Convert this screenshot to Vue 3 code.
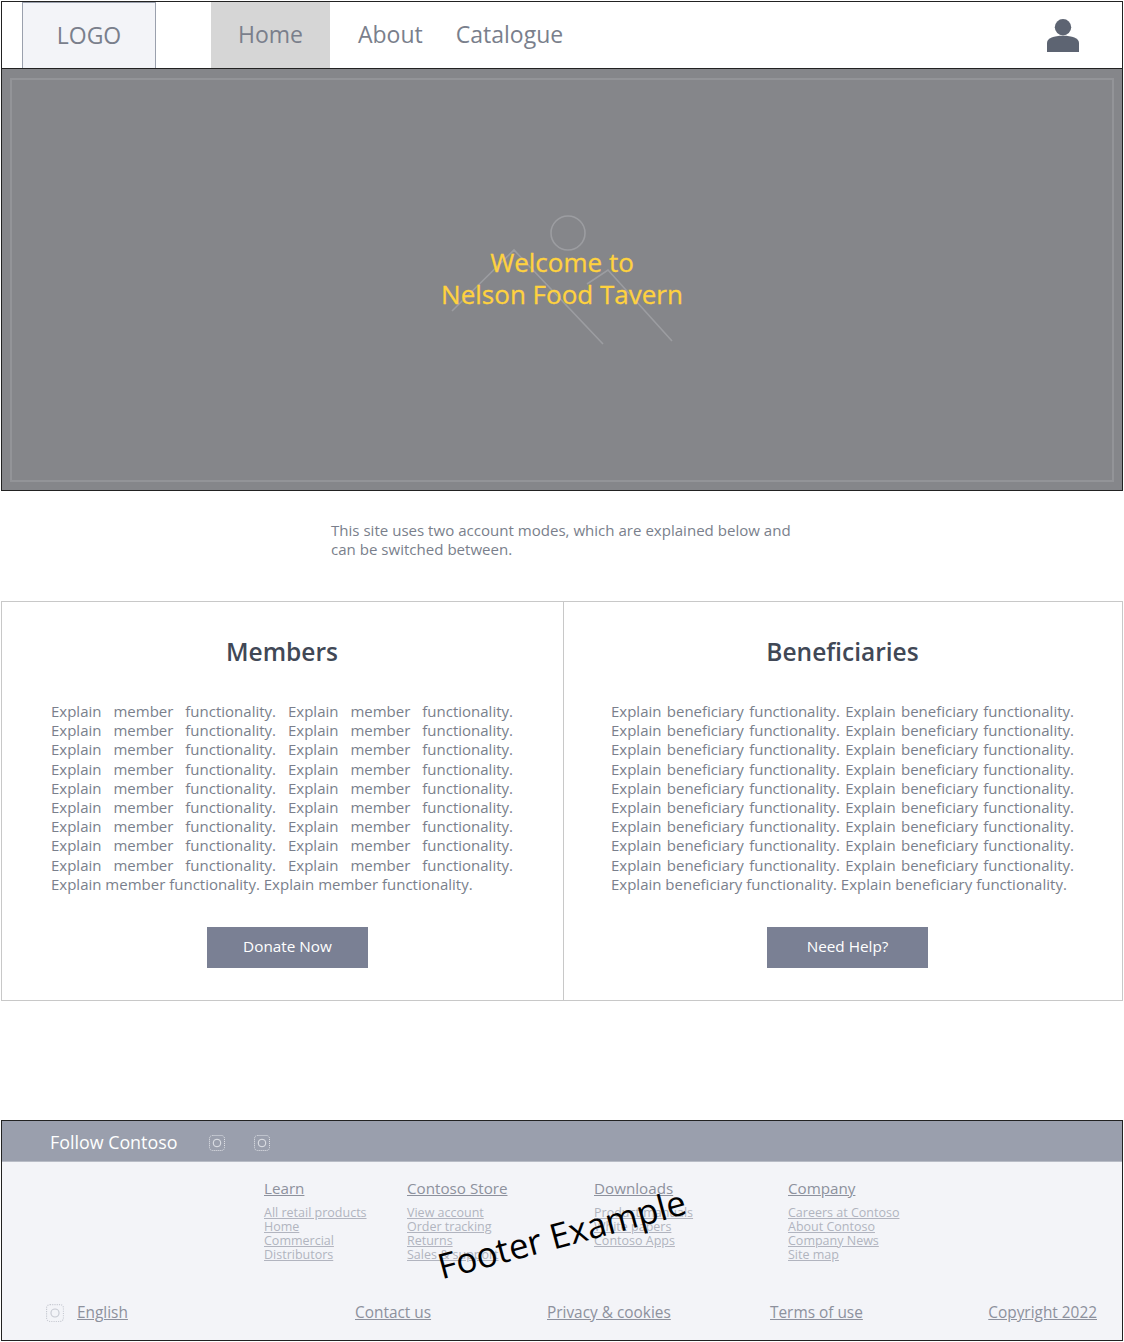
<template>
  <div class="page">
    <header class="top-nav">
      <div class="logo">LOGO</div>
      <nav class="nav-links">
        <a class="nav-link active">Home</a>
        <a class="nav-link">About</a>
        <a class="nav-link">Catalogue</a>
      </nav>
      <svg class="user-icon" viewBox="0 0 32 33">
        <circle cx="16" cy="8.2" r="8.2" />
        <path d="M0 33V24C0 19 7 16.7 16 16.7S32 19 32 24V33Z" />
      </svg>
    </header>

    <section class="hero">
      <div class="hero-frame">
        <svg class="hero-art" viewBox="0 0 240 150">
          <circle cx="128" cy="23" r="17" />
          <path d="M12 101L74 40L163 134M147 74L168 60L232 131" />
        </svg>
        <h1>Welcome to<br />Nelson Food Tavern</h1>
      </div>
    </section>

    <p class="intro">This site uses two account modes, which are explained below and can be switched between.</p>

    <section class="modes">
      <article v-for="mode in modes" :key="mode.title" class="mode">
        <h2>{{ mode.title }}</h2>
        <p>{{ mode.text }}</p>
        <button class="cta">{{ mode.action }}</button>
      </article>
    </section>

    <footer class="footer">
      <div class="follow">
        <span class="follow-label">Follow Contoso</span>
        <svg v-for="n in 2" :key="n" class="dot-icon" viewBox="0 0 16 16">
          <rect x="0.5" y="0.5" width="15" height="15" rx="3" />
          <circle cx="8" cy="8" r="3.8" />
        </svg>
      </div>
      <div class="columns">
        <div v-for="col in columns" :key="col.title" class="column" :style="{ width: col.width + 'px' }">
          <a class="col-title">{{ col.title }}</a>
          <a v-for="link in col.links" :key="link" class="col-link">{{ link }}</a>
        </div>
      </div>
      <div class="legal">
        <span class="lang">
          <svg class="dot-icon faint" viewBox="0 0 16 16">
            <rect x="0.5" y="0.5" width="15" height="15" rx="3" />
            <circle cx="8" cy="8" r="3.6" />
          </svg>
          <a>English</a>
        </span>
        <a>Contact us</a>
        <a>Privacy &amp; cookies</a>
        <a>Terms of use</a>
        <a class="copyright">Copyright 2022</a>
      </div>
      <div class="stamp">Footer Example</div>
    </footer>
  </div>
</template>

<script setup>
const modes = [
  {
    title: 'Members',
    text: 'Explain member functionality. '.repeat(20).trim(),
    action: 'Donate Now'
  },
  {
    title: 'Beneficiaries',
    text: 'Explain beneficiary functionality. '.repeat(20).trim(),
    action: 'Need Help?'
  }
]

const columns = [
  { title: 'Learn', width: 143, links: ['All retail products', 'Home', 'Commercial', 'Distributors'] },
  { title: 'Contoso Store', width: 187, links: ['View account', 'Order tracking', 'Returns', 'Sales & support'] },
  { title: 'Downloads', width: 194, links: ['Product manuals', 'White papers', 'Contoso Apps'] },
  { title: 'Company', width: 150, links: ['Careers at Contoso', 'About Contoso', 'Company News', 'Site map'] }
]
</script>

<style>
html,
body {
  margin: 0;
  background: #fff;
}
</style>

<style scoped>
.page {
  width: 1122px;
  padding: 1px 0 0 1px;
  font-family: 'Open Sans', 'Noto Sans', sans-serif;
  color: #7a7f8c;
}

.top-nav {
  height: 68px;
  box-sizing: border-box;
  display: flex;
  align-items: stretch;
  background: #fff;
  border: 1px solid #222;
}

.logo {
  width: 134px;
  box-sizing: border-box;
  margin-left: 20px;
  padding-bottom: 2px;
  background: #f3f4f8;
  border: 1px solid #9aa0ad;
  border-bottom: 0;
  display: flex;
  align-items: center;
  justify-content: center;
  font-size: 23px;
}

.nav-links {
  display: flex;
  margin-left: 55px;
  font-size: 23px;
}

.nav-link {
  display: flex;
  align-items: center;
  padding: 0 33px 2px 0;
}

.nav-link.active {
  width: 119px;
  padding: 0 0 2px;
  justify-content: center;
  background: #d6d6d6;
  margin-right: 28px;
}

.user-icon {
  width: 32px;
  height: 33px;
  margin: 17px 43px 0 auto;
  fill: #5d6472;
}

.hero {
  height: 422px;
  box-sizing: border-box;
  padding: 9px 8px 8px;
  background: #85868a;
  border: 1px solid #222;
  border-top: 0;
}

.hero-frame {
  position: relative;
  height: 100%;
  box-sizing: border-box;
  border: 2px solid #939498;
  display: flex;
  align-items: center;
  justify-content: center;
}

.hero-art {
  position: absolute;
  left: 428px;
  top: 130px;
  width: 240px;
  height: 150px;
  fill: none;
  stroke: #9c9da1;
  stroke-width: 1.6;
}

.hero-frame h1 {
  position: relative;
  margin: 0 0 4px;
  color: #ffd23f;
  font-size: 26px;
  line-height: 32px;
  font-weight: 400;
  -webkit-text-stroke: 0.3px #ffd23f;
  text-align: center;
}

.intro {
  width: 470px;
  margin: 30px 0 42px 330px;
  font-size: 15.07px;
  line-height: 19px;
}

.modes {
  display: grid;
  grid-template-columns: 561px 1fr;
  height: 400px;
  box-sizing: border-box;
  border: 1px solid #c8c8c8;
}

.mode {
  display: flex;
  flex-direction: column;
  padding: 0 50px 0 49px;
}

.mode + .mode {
  border-left: 1px solid #c8c8c8;
  padding: 0 48px 0 47px;
}

.mode h2 {
  margin: 32px 0 0;
  color: #414856;
  font-size: 24.5px;
  line-height: 36px;
  font-weight: 600;
  text-align: center;
}

.mode p {
  margin: 32px 0 0;
  font-size: 15px;
  line-height: 19.2px;
  text-align: justify;
}

.cta {
  width: 161px;
  height: 41px;
  margin: 33px 0 0 156px;
  padding: 0 0 3px;
  border: 0;
  background: #7a8094;
  color: #fff;
  font-family: inherit;
  font-size: 15.3px;
}

.footer {
  position: relative;
  margin-top: 119px;
  height: 221px;
  box-sizing: border-box;
  background: #f3f4f8;
  border: 1px solid #222;
}

.follow {
  height: 41px;
  box-sizing: border-box;
  display: flex;
  align-items: center;
  padding: 3px 0 0 48px;
  background: #9a9fad;
  border-bottom: 1px solid #b8bcc6;
  color: #fff;
  font-size: 17.85px;
}

.follow-label {
  width: 159px;
  margin-top: -2px;
}

.dot-icon {
  width: 16px;
  height: 16px;
  margin-right: 29px;
  fill: none;
  stroke: #e3e5ea;
  stroke-width: 1;
}

.dot-icon rect {
  stroke-dasharray: 1 1;
}

.dot-icon.faint {
  width: 18px;
  height: 18px;
  margin: 0;
  stroke: #c6c9d1;
}

.columns {
  display: flex;
  padding: 16px 0 0 262px;
  height: 117px;
  box-sizing: border-box;
}

.column {
  display: flex;
  flex-direction: column;
  align-items: flex-start;
}

.col-title {
  margin-bottom: 8px;
  color: #8d919d;
  font-size: 15.2px;
  line-height: 20px;
  text-decoration: underline;
}

.col-link {
  color: #b1b4bf;
  font-size: 12.5px;
  line-height: 14px;
  text-decoration: underline;
}

.legal {
  display: grid;
  grid-template-columns: 309px 192px 223px 218px 1fr;
  align-items: center;
  margin: 23px 25px 0 44px;
  color: #8d919d;
  font-size: 15.4px;
}

.legal a {
  text-decoration: underline;
}

.legal .copyright {
  justify-self: end;
}

.lang {
  display: flex;
  align-items: center;
  gap: 13px;
}

.stamp {
  position: absolute;
  left: 432px;
  top: 91px;
  color: #000;
  font-size: 35px;
  line-height: 44px;
  white-space: nowrap;
  transform: rotate(-15deg);
}
</style>
